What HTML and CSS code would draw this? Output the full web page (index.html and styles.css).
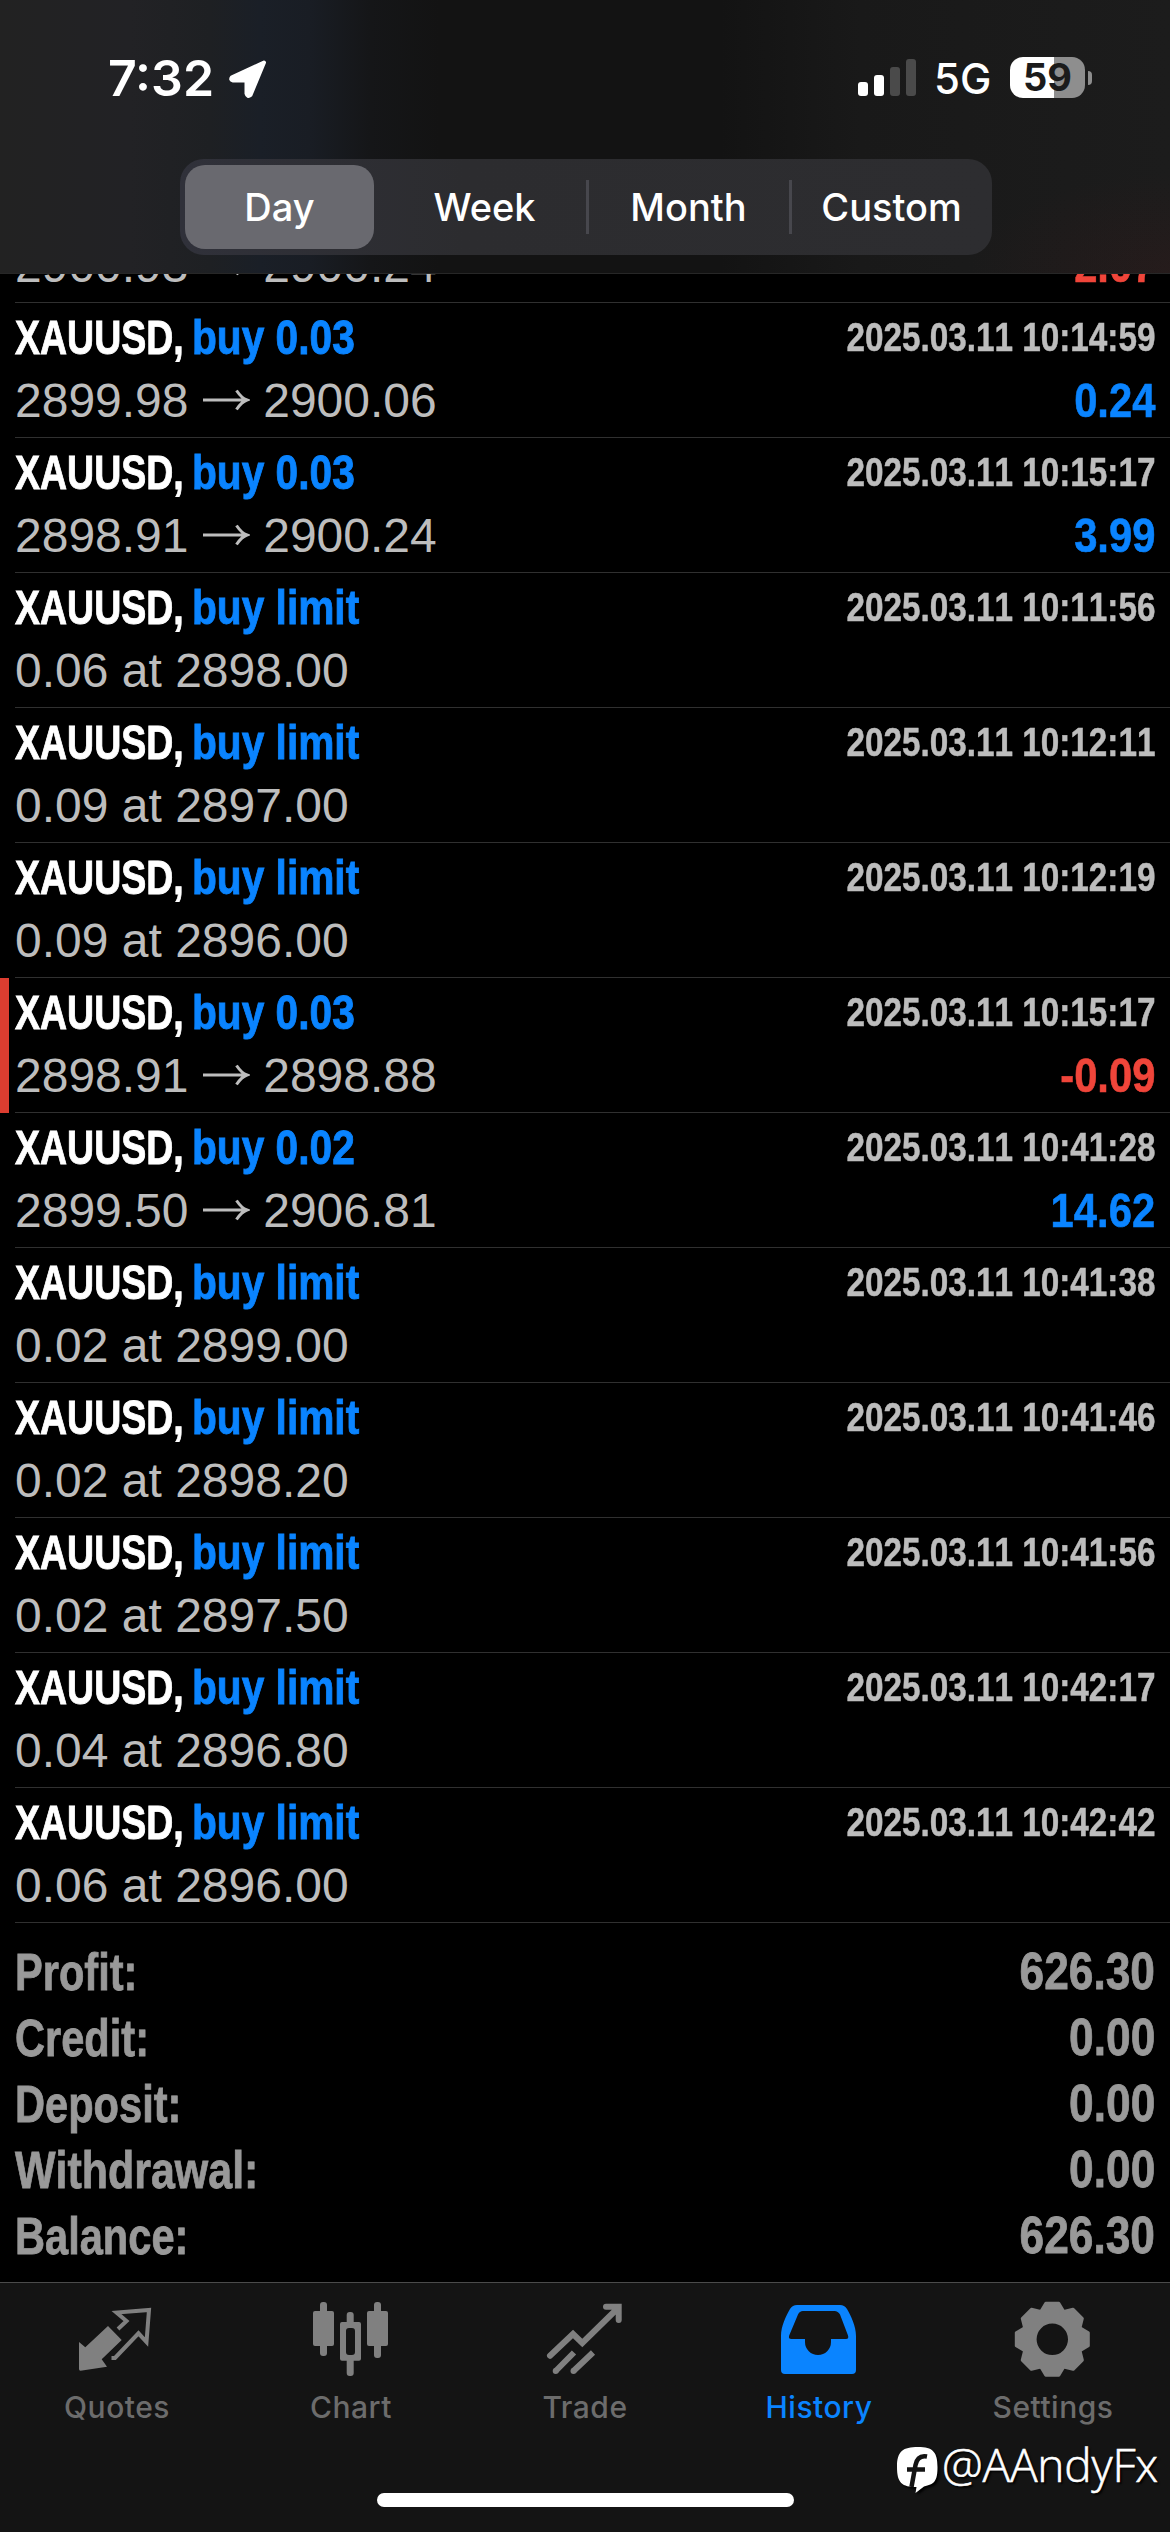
FILE: index.html
```html
<!DOCTYPE html>
<html lang="en">
<head>
<meta charset="utf-8">
<title>History</title>
<link rel="stylesheet" href="styles.css">
</head>
<body>
<svg class="defs" width="0" height="0" aria-hidden="true">
  <symbol id="arrow" viewBox="0 0 48 24"><path d="M1 12H44M34.5 2.5C37.5 7 40.500 10.500 45 12C40.500 13.500 37.500 17 34.500 21.500" fill="none" stroke="currentColor" stroke-width="3"/></symbol>
</svg>
<div class="screen">
  <header class="header">
    <div class="status">
      <div class="status-left">
        <span class="clock">7:32</span>
        <svg class="location" viewBox="0 0 40 40"><path d="M36 3.500L4 18.300Q2 21 5 21.500H18.500V34.500Q19.500 38.500 22.500 36Z" fill="#fff" stroke="#fff" stroke-width="4" stroke-linejoin="round"/></svg>
      </div>
      <div class="status-right">
        <svg class="signal" viewBox="0 0 58 38"><g fill="#fff"><rect x="0" y="23" width="10" height="14" rx="3"/><rect x="16" y="16" width="10" height="21" rx="3"/></g><g fill="#4a4a4a"><rect x="32" y="8" width="10" height="29" rx="3"/><rect x="48" y="0" width="10" height="37" rx="3"/></g></svg>
        <span class="network">5G</span>
        <div class="battery"><span class="battery-level">59</span><i class="battery-tip"></i></div>
      </div>
    </div>
    <nav class="segments">
      <span class="segment active">Day</span>
      <span class="segment">Week</span>
      <span class="segment divided">Month</span>
      <span class="segment divided">Custom</span>
    </nav>
  </header>

  <main class="list">
    <article class="deal first"><div class="bottom"><span class="price">2900.93 <svg class="arrow"><use href="#arrow"/></svg> 2900.24</span><b class="profit loss">-2.07</b></div></article>
    <article class="deal"><div class="top"><b class="symbol">XAUUSD,</b><b class="side">buy 0.03</b><time>2025.03.11 10:14:59</time></div><div class="bottom"><span class="price">2899.98 <svg class="arrow"><use href="#arrow"/></svg> 2900.06</span><b class="profit">0.24</b></div></article>
    <article class="deal"><div class="top"><b class="symbol">XAUUSD,</b><b class="side">buy 0.03</b><time>2025.03.11 10:15:17</time></div><div class="bottom"><span class="price">2898.91 <svg class="arrow"><use href="#arrow"/></svg> 2900.24</span><b class="profit">3.99</b></div></article>
    <article class="deal"><div class="top"><b class="symbol">XAUUSD,</b><b class="side">buy limit</b><time>2025.03.11 10:11:56</time></div><div class="bottom"><span class="price">0.06 at 2898.00</span></div></article>
    <article class="deal"><div class="top"><b class="symbol">XAUUSD,</b><b class="side">buy limit</b><time>2025.03.11 10:12:11</time></div><div class="bottom"><span class="price">0.09 at 2897.00</span></div></article>
    <article class="deal"><div class="top"><b class="symbol">XAUUSD,</b><b class="side">buy limit</b><time>2025.03.11 10:12:19</time></div><div class="bottom"><span class="price">0.09 at 2896.00</span></div></article>
    <article class="deal stopped"><div class="top"><b class="symbol">XAUUSD,</b><b class="side">buy 0.03</b><time>2025.03.11 10:15:17</time></div><div class="bottom"><span class="price">2898.91 <svg class="arrow"><use href="#arrow"/></svg> 2898.88</span><b class="profit loss">-0.09</b></div></article>
    <article class="deal"><div class="top"><b class="symbol">XAUUSD,</b><b class="side">buy 0.02</b><time>2025.03.11 10:41:28</time></div><div class="bottom"><span class="price">2899.50 <svg class="arrow"><use href="#arrow"/></svg> 2906.81</span><b class="profit">14.62</b></div></article>
    <article class="deal"><div class="top"><b class="symbol">XAUUSD,</b><b class="side">buy limit</b><time>2025.03.11 10:41:38</time></div><div class="bottom"><span class="price">0.02 at 2899.00</span></div></article>
    <article class="deal"><div class="top"><b class="symbol">XAUUSD,</b><b class="side">buy limit</b><time>2025.03.11 10:41:46</time></div><div class="bottom"><span class="price">0.02 at 2898.20</span></div></article>
    <article class="deal"><div class="top"><b class="symbol">XAUUSD,</b><b class="side">buy limit</b><time>2025.03.11 10:41:56</time></div><div class="bottom"><span class="price">0.02 at 2897.50</span></div></article>
    <article class="deal"><div class="top"><b class="symbol">XAUUSD,</b><b class="side">buy limit</b><time>2025.03.11 10:42:17</time></div><div class="bottom"><span class="price">0.04 at 2896.80</span></div></article>
    <article class="deal"><div class="top"><b class="symbol">XAUUSD,</b><b class="side">buy limit</b><time>2025.03.11 10:42:42</time></div><div class="bottom"><span class="price">0.06 at 2896.00</span></div></article>

    <section class="summary">
      <div class="total"><span class="label">Profit:</span><span class="amount">626.30</span></div>
      <div class="total"><span class="label">Credit:</span><span class="amount">0.00</span></div>
      <div class="total"><span class="label">Deposit:</span><span class="amount">0.00</span></div>
      <div class="total"><span class="label wide">Withdrawal:</span><span class="amount">0.00</span></div>
      <div class="total"><span class="label">Balance:</span><span class="amount">626.30</span></div>
    </section>
  </main>

  <footer class="footer">
    <nav class="tabs">
      <div class="tab">
        <svg class="icon" viewBox="0 0 80 80"><path d="M2 42L8.300 47.300L31 26L44.700 40L24.700 59.300L30 66.700L3.500 70.700Q2 70.700 2 69Z" fill="currentColor"/><path d="M41 29L49.500 21L39.500 12.500L72 10L69.500 42L61.500 33.300L38 58H34.500" fill="none" stroke="currentColor" stroke-width="4"/></svg>
        <span>Quotes</span>
      </div>
      <div class="tab">
        <svg class="icon" viewBox="0 0 80 80" fill="currentColor"><rect x="2" y="11" width="21" height="35" rx="2"/><rect x="9" y="2" width="7" height="54" rx="3"/><rect x="35.700" y="12" width="7" height="16" rx="3"/><rect x="35.700" y="56" width="7" height="20" rx="3"/><path fill-rule="evenodd" d="M31 22H48Q50 22 50 24V58.700Q50 60.700 48 60.700H31Q29 60.700 29 58.700V24Q29 22 31 22ZM38 28Q35 28 35 31V52Q35 55 38 55H41Q44 55 44 52V31Q44 28 41 28Z"/><rect x="56" y="11" width="21" height="35" rx="2"/><rect x="63" y="2" width="7" height="56" rx="3"/></svg>
        <span>Chart</span>
      </div>
      <div class="tab">
        <svg class="icon" viewBox="0 0 80 80" fill="none" stroke="currentColor" stroke-width="6"><path stroke-linecap="round" d="M5 55.700L28 34L37.300 43L73 8M61 6.700H73.700V20"/><path d="M10.700 71L29 52.500M28.500 71L48 52.500"/><g fill="currentColor" stroke="none"><circle cx="10.700" cy="71" r="3"/><circle cx="28.500" cy="71" r="3"/></g></svg>
        <span>Trade</span>
      </div>
      <div class="tab current">
        <svg class="icon" viewBox="0 0 80 80"><path fill="currentColor" fill-rule="evenodd" d="M18 5H61Q65.500 5 68 9C72 16 77 26 77 36V70Q77 74 73 74H6Q2 74 2 70V36C2 26 7 16 11 9Q13.500 5 18 5ZM24 11Q20.500 11 19 14.500L10.200 35.500Q9 39 12.500 39H26V42A13 13 0 0 0 52 42V39H67Q70 39 69 35.500L61 14.500Q59 11 55.500 11Z"/></svg>
        <span>History</span>
      </div>
      <div class="tab">
        <svg class="icon" viewBox="0 0 80 80"><defs><path id="tooth" d="M-12.500 -26L-6.500 -36H6.500L12.500 -26Z" stroke="currentColor" stroke-width="3" stroke-linejoin="round"/></defs><g transform="translate(39.300 39.300)" fill="currentColor"><circle r="22.700" fill="none" stroke="currentColor" stroke-width="14"/><use href="#tooth"/><use href="#tooth" transform="rotate(45)"/><use href="#tooth" transform="rotate(90)"/><use href="#tooth" transform="rotate(135)"/><use href="#tooth" transform="rotate(180)"/><use href="#tooth" transform="rotate(225)"/><use href="#tooth" transform="rotate(270)"/><use href="#tooth" transform="rotate(315)"/></g></svg>
        <span>Settings</span>
      </div>
    </nav>
    <div class="credit">
      <svg class="badge" viewBox="0 0 42 48"><path d="M21 0C36 0 40.500 5 40.500 20S37 37 27 39.500L18.500 46L19.500 40C5 40 0 36 0 20S6 0 21 0Z" fill="#fff"/><path d="M30 9.500C22 8 19.500 13 18.500 18L14.500 40M10 22.500H28" fill="none" stroke="#141414" stroke-width="4.500"/></svg>
      <span>@AAndyFx</span>
    </div>
    <div class="home"></div>
  </footer>
</div>
</body>
</html>
```
FILE: styles.css
```css
* { box-sizing: border-box; }
body { margin: 0; background: #000; color: #fff; font-family: Inter, "Liberation Sans", sans-serif; }
.defs { position: absolute; }
.screen { width: 1170px; height: 2532px; display: flex; flex-direction: column; overflow: hidden; background: #000; }

.header {
  flex: none; height: 274px; border-bottom: 1px solid #272727;
  background:
    radial-gradient(ellipse 200px 100px at 100% 100%, rgba(75, 25, 25, .2), transparent),
    linear-gradient(90deg, #222 0, #222225 130px, #1e2023 210px, #1a1f27 260px, #191d24 310px, #151618 370px, #131313 440px, #131313 720px, #191919 860px, #1c1c1c 1170px);
}
.status { height: 159px; padding: 48px 78px 0 108px; display: flex; justify-content: space-between; align-items: flex-start; }
.status-left, .status-right { display: flex; align-items: flex-start; }
.clock { font-size: 50px; font-weight: 600; line-height: 60px; }
.location { width: 40px; height: 40px; margin: 11px 0 0 14px; }
.signal { width: 58px; height: 38px; margin: 11px 18px 0 0; }
.network { font-size: 42px; font-weight: 500; line-height: 60px; margin-top: 1px; width: 76px; }
.battery { display: flex; align-items: center; gap: 3px; margin-top: 9px; }
.battery-level {
  width: 75px; height: 41px; border-radius: 13px; color: #1b1b1b; text-align: center;
  background: linear-gradient(90deg, #fff 44px, #8e8e8e 44px); font-size: 38px; font-weight: 700; line-height: 41px;
}
.battery-tip { width: 4px; height: 14px; border-radius: 0 4px 4px 0; background: #8e8e8e; }

.segments {
  width: 812px; height: 96px; margin-left: 180px; border-radius: 24px; background: linear-gradient(90deg, #30313a, #2c2c2f 35%, #2d2d30);
  display: grid; grid-template-columns: repeat(4, 1fr);
}
.segment { display: flex; align-items: center; justify-content: center; font-size: 38px; font-weight: 500; }
.segment.active { margin: 6px 9px 6px 5px; border-radius: 20px; background: #69696f; }
.segment.divided { padding-left: 2px; background: linear-gradient(#47474d, #47474d) 0 21px / 3px 54px no-repeat; }

.list { flex: 1; min-height: 0; overflow: hidden; font-family: "Liberation Sans", Arial, sans-serif; font-kerning: none; }
.deal { height: 135px; padding: 6px 15px 0; background: linear-gradient(#303030, #303030) 15px 100% / 1155px 1px no-repeat; }
/* scrolled most of the way under the header */
.deal.first { height: 29px; padding-top: 0; display: flex; align-items: flex-end; overflow: hidden; }
.deal.first .bottom { flex: 1; margin-bottom: 6px; }
.deal.stopped { box-shadow: inset 9px 0 #dc3d30; }
.top { height: 60px; display: grid; grid-template-columns: 177px 1fr auto; line-height: 56px; white-space: nowrap; }
.symbol, .side { font-size: 49px; transform-origin: 0 0; justify-self: start; -webkit-text-stroke: .9px; }
.symbol { transform: scaleX(.765); }
.side { color: #0a84ff; transform: scaleX(.83); }
.top time { font-size: 40px; font-weight: 700; color: #bdbdbd; transform: scaleX(.832); transform-origin: 100% 0; -webkit-text-stroke: .5px; }
.bottom { display: flex; justify-content: space-between; font-size: 48px; line-height: 63px; color: #bdbdbd; white-space: nowrap; }
.arrow { width: 48px; height: 24px; vertical-align: 5px; }
.profit { color: #0a84ff; transform: scaleX(.87); transform-origin: 100% 0; -webkit-text-stroke: .6px; }
.profit.loss { color: #f0453a; }

.summary { padding: 16px 15px 0; color: #999; font-weight: 700; font-size: 52px; line-height: 66px; -webkit-text-stroke: .8px; }
.total { height: 66px; display: flex; justify-content: space-between; }
.label { transform: scaleX(.8); transform-origin: 0 0; }
.label.wide { transform: scaleX(.826); }
.amount { font-size: 51px; transform: scaleX(.868); transform-origin: 100% 0; }

.footer { flex: none; position: relative; height: 250px; border-top: 1px solid #4b4b4b; background: #141414; }
.tabs { display: grid; grid-template-columns: repeat(5, 1fr); height: 209px; padding-top: 17px; color: #808080; }
.tab { display: flex; flex-direction: column; align-items: center; font-size: 30px; font-weight: 500; letter-spacing: .5px; line-height: 36px; }
.tab span { margin-top: 9px; color: #6c6c6c; }
.icon { width: 80px; height: 80px; }
.tab.current, .tab.current span { color: #0a84ff; }
.home { width: 417px; height: 14px; margin: 1px auto 0; border-radius: 7px; background: #fff; }
.credit {
  position: absolute; right: 12px; top: 150px; display: flex; gap: 3px;
  font-family: "Open Sans", "Noto Sans", sans-serif; font-weight: 300; font-size: 46px; line-height: 62px;
  -webkit-text-stroke: .6px #fff; text-shadow: 2px 2px 2px #000;
}
.credit span { letter-spacing: -.2px; }
.badge { width: 42px; height: 48px; margin-top: 14px; filter: drop-shadow(2px 2px 1px #000); }
```
